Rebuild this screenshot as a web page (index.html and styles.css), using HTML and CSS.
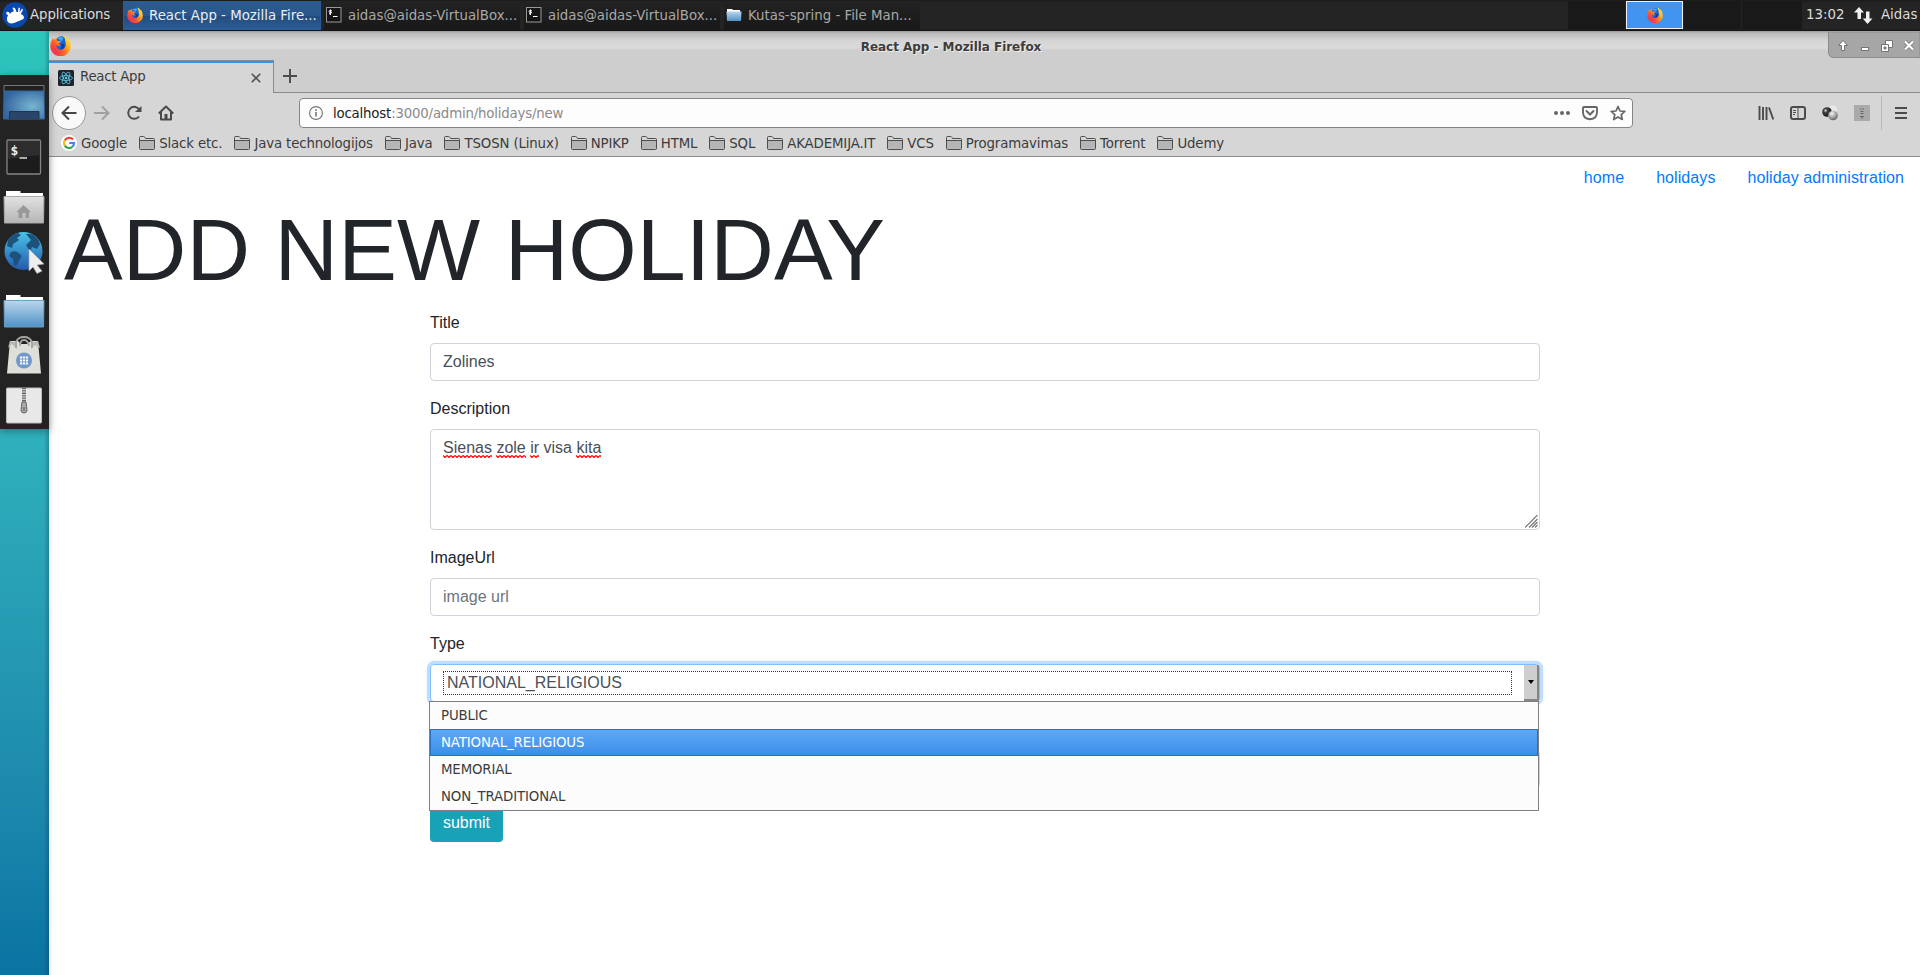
FILE: index.html
```html
<!DOCTYPE html>
<html lang="en">
<head>
<meta charset="utf-8">
<title>React App</title>
<link rel="stylesheet" href="styles.css">
</head>
<body>
<svg class="defs" aria-hidden="true">
  <defs>
    <linearGradient id="fire" x1="1" y1="0" x2="0" y2="1"><stop offset="0" stop-color="#fff44f"/><stop offset=".35" stop-color="#ffb21c"/><stop offset=".65" stop-color="#ff5a2a"/><stop offset="1" stop-color="#e3107c"/></linearGradient>
    <linearGradient id="blueFolder" x1="0" y1="0" x2="0" y2="1"><stop offset="0" stop-color="#bcd6ea"/><stop offset="1" stop-color="#4f92c6"/></linearGradient>
    <linearGradient id="greyFolder" x1="0" y1="0" x2="0" y2="1"><stop offset="0" stop-color="#e2e2e2"/><stop offset="1" stop-color="#b5b5b5"/></linearGradient>
    <linearGradient id="globe" x1="0" y1="0" x2="0" y2="1"><stop offset="0" stop-color="#49c3e6"/><stop offset="1" stop-color="#2459ad"/></linearGradient>
    <radialGradient id="screen" cx=".7" cy=".55" r=".7"><stop offset="0" stop-color="#76b6d0"/><stop offset="1" stop-color="#3565a0"/></radialGradient>
    <radialGradient id="ballDark" cx=".35" cy=".35" r=".7"><stop offset="0" stop-color="#ddd"/><stop offset=".3" stop-color="#444"/><stop offset="1" stop-color="#111"/></radialGradient>
    <radialGradient id="ballGrey" cx=".4" cy=".3" r=".7"><stop offset="0" stop-color="#f4f4f4"/><stop offset="1" stop-color="#666"/></radialGradient>
    <symbol id="firefox" viewBox="0 0 20 20">
      <path d="M2.5 3.2 4 4.6Q5 3 7 2.1L6.7 4.2 10 3.6 13.5 3 13 .5Q15.400 1.300 16.600 4.200L17.400 3.300Q20 6.500 19.800 11A9.800 9.200 0 0 1 .2 11Q.2 6.500 2.500 3.200Z" fill="url(#fire)"/>
      <path d="M6.500 3.500Q10-.5 14 2.500 16 5 15.500 9 14 14.500 10 14.500 5.500 14 5.500 10Z" fill="#1b63d6"/>
      <path d="M7 3Q10 1 13 2.500L11 6Z" fill="#35a9f5"/>
      <path d="M10.500 8.500Q14 8 14 10.500 13 14 9 13.500 12 11.500 10.500 8.500Z" fill="#173a9e"/>
      <path d="M3 4 7 5.500 10.500 6 8.500 8.300 10 10.500Q8 11 6.500 9.500 5.500 11.500 7.500 13 11 15.500 14 12.500 16 10 14.500 6 14.500 3 13.200.8 19 4 18.500 11 17 17 10 17.800 3 16.500 2 10Z" fill="url(#fire)"/>
    </symbol>
    <symbol id="term" viewBox="0 0 16 16">
      <rect x=".5" y=".5" width="14.500" height="14.500" fill="#151515" stroke="#999"/>
      <path d="M6 4Q3 2.600 3 4.200T5 5.500 3 7M4.500 2.500v5.500" fill="none" stroke="#fff"/><path d="M7 9.500h4.500" stroke="#fff"/>
    </symbol>
    <symbol id="folder" viewBox="0 0 16 16">
      <path d="M.5 13.500v-11q0-1 1-1h3q1 0 1.500 1l.5 1h8q1 0 1 1v9q0 1-1 1h-13q-1 0-1-1Z" fill="#d6d6d6" stroke="#4d4d4d"/><path d="M1 5.800h14v8H1Z" fill="#b5b5b5"/><path d="M.5 5.500h15" stroke="#4d4d4d"/>
    </symbol>
  </defs>
</svg>

<header class="panel">
  <div class="apps">
    <svg class="mouse" width="26" height="26" viewBox="0 0 26 26"><circle cx="13" cy="13" r="12.700" fill="#0a48b0"/><path d="M4.500 10Q7 9 8 12 9 9 12 9.500L10.500 6Q12 4.500 13.500 7L14.500 10 16 10 16.500 5.500 18 6 17.500 10.500 20 6.500 21 8 18.800 12Q23 13.500 21.500 17 17 19 12 21 6 22.500 5 18 4.500 14.500 6.200 13.500 3.500 12 4.500 10Z" fill="#fff"/></svg>
    <span class="apps-label">Applications</span>
  </div>
  <nav class="tasks">
    <div class="task task-active"><svg width="16" height="16"><use href="#firefox"/></svg><span>React App - Mozilla Fire...</span></div>
    <div class="task"><svg width="16" height="16"><use href="#term"/></svg><span>aidas@aidas-VirtualBox...</span></div>
    <div class="task"><svg width="16" height="16"><use href="#term"/></svg><span>aidas@aidas-VirtualBox...</span></div>
    <div class="task"><svg width="16" height="16" viewBox="0 0 16 16"><path d="M1 2h5l1 1h7v5H1Z" fill="#fff"/><path d="M.500 4.500h15L15 14H1Z" fill="url(#blueFolder)"/></svg><span>Kutas-spring - File Man...</span></div>
  </nav>
  <div class="pager">
    <i></i><i class="current"><svg width="16" height="16"><use href="#firefox"/></svg></i><i></i><i></i>
  </div>
  <span class="clock">13:02</span>
  <svg class="net" width="19" height="17" viewBox="0 0 19 17"><path d="M5 0 10 5.500H7V12H3.500V5.500H0ZM13.500 17 8.800 11.500H12V4.500H15.500V11.500H18.500Z" fill="#f0f0f0"/></svg>
  <span class="user">Aidas</span>
</header>

<div class="desktop">
  <aside class="side">
    <div class="dock">
      <svg width="42" height="36" viewBox="0 0 42 36"><path d="M1 8V1.500H41V8" fill="#202020" stroke="#777"/><path d="M1 7H41L41.500 35H.5Z" fill="url(#screen)" stroke="#33669a"/><path d="M6.500 35V27.500H36V35" fill="#29466a" stroke="#203650"/></svg>
      <svg width="36" height="36" viewBox="0 0 36 36"><rect x="1" y="1" width="33.500" height="34" rx="1" fill="#1c1c1c" stroke="#858585" stroke-width="1.300"/><path d="M2 2H34V16L2 20Z" fill="#2d2d2d"/><text x="4.500" y="16" class="prompt">$</text><path d="M13.500 19h7.500" stroke="#ddd" stroke-width="1.500"/></svg>
      <svg width="42" height="34" viewBox="0 0 42 34"><path d="M3 9V1H17.500V3H40V10Z" fill="#fff"/><path d="M1 6.500H41L40.500 33H1.500Z" fill="url(#greyFolder)" stroke="#aaa"/><path d="M20.500 15 28 22H26V28H22.500V23H19.500V28H15.500V22H13.500Z" fill="#999"/></svg>
      <svg width="42" height="43" viewBox="0 0 42 43"><circle cx="20.500" cy="20" r="19" fill="url(#globe)"/><path d="M5 9Q9 3 15 2L18 4 14 7 16 9 10 13 9 17 4 15ZM8 21Q13 19 17 23 20 26 17 28L14 34 11 35 10 28 6 25ZM23 3Q30 2 35 8L37 13 34 18 29 16 27 21 23 14 28 9Z" fill="#1c527c"/><path d="M26 18 41 33 34 34 39 40 34 42.500 30 36 26 40Z" fill="#eee" stroke="#aaa" stroke-width=".7"/></svg>
      <svg width="42" height="34" viewBox="0 0 42 34"><path d="M3 9V1H17.500V3H40V10Z" fill="#fff"/><path d="M1 6.500H41L40.500 33H1.500Z" fill="url(#blueFolder)" stroke="#6ba0c6"/></svg>
      <svg width="36" height="39" viewBox="0 0 36 39"><path d="M4 5H12L15 8H21L25 5H32L35 37.500H1Z" fill="#dedfd8"/><path d="M4 5 2 12 6 8 11 13V7ZM32 5 34 12 29 9 25 13V7Z" fill="#b8b9b3"/><path d="M10 12V6Q12 1 18 1T26 6V12M14 10Q14 4 18 4T23 10" fill="none" stroke="#a5a6a1" stroke-width="1.800"/><circle cx="18" cy="24.500" r="8" fill="#7199cb"/><path d="M14 21.500h8M14 24.500h8M14 27.500h8" stroke="#fff" stroke-width="2" stroke-dasharray="2.200 .8"/></svg>
      <svg width="36" height="37" viewBox="0 0 36 37"><rect x=".5" y="1" width="35" height="35" rx="1" fill="#e8e8e8" stroke="#bbb"/><path d="M18 1V16" stroke="#666" stroke-width="4" stroke-dasharray="1 .7"/><path d="M16 15h4l1 8q0 3-3 3t-3-3Z" fill="#aaa" stroke="#666"/><path d="M18 20v4" stroke="#555"/></svg>
    </div>
  </aside>

  <main class="window">
    <div class="titlebar">
      <svg class="window-icon" width="21" height="21"><use href="#firefox"/></svg>
      <span class="window-title">React App - Mozilla Firefox</span>
      <svg class="controls" width="92" height="26" viewBox="0 0 92 26"><path d="M.5 0V20Q.5 25.500 6 25.500H92V0Z" fill="#a6a6a6" stroke="#8b8b8b"/><g fill="#fff" stroke="#747474" stroke-width="1"><path d="M15 8.500 19.500 13.500H16.500V18.500H13.500V13.500H10.500Z"/><rect x="33.500" y="15.500" width="7" height="3"/><path d="M57.500 8.500H64.500V15.500H57.500Z"/><path d="M53.500 12.500H60.500V19.500H53.500Z"/><path d="M56 15h2v2h-2Z" fill="#999"/></g><path d="M77 9.500 85 17.500M85 9.500 77 17.500" stroke="#777" stroke-width="3.800"/><path d="M77 9.500 85 17.500M85 9.500 77 17.500" stroke="#fff" stroke-width="2.200"/></svg>
    </div>

    <div class="tabstrip">
      <div class="tab">
        <svg width="16" height="16" viewBox="0 0 16 16"><rect width="16" height="16" rx="1.500" fill="#20232a"/><g fill="none" stroke="#5ccfee" stroke-width=".8"><ellipse cx="8" cy="8" rx="6.500" ry="2.500"/><ellipse cx="8" cy="8" rx="6.500" ry="2.500" transform="rotate(60 8 8)"/><ellipse cx="8" cy="8" rx="6.500" ry="2.500" transform="rotate(120 8 8)"/></g><circle cx="8" cy="8" r="1.300" fill="#5ccfee"/></svg>
        <span class="tab-title">React App</span>
        <svg width="10" height="10" viewBox="0 0 10 10"><path d="M.7.7 9.300 9.300M9.300.7.7 9.300" stroke="#555" stroke-width="1.600"/></svg>
      </div>
      <svg class="new-tab" width="14" height="14" viewBox="0 0 14 14"><path d="M7 0V14M0 7H14" stroke="#4d4d4d" stroke-width="2"/></svg>
    </div>

    <div class="toolbar">
      <div class="nav-buttons">
        <span class="back"><svg width="16" height="16" viewBox="0 0 16 16"><path d="M15.500 8H1.500M8 1.500 1.500 8 8 14.500" fill="none" stroke="#454545" stroke-width="2"/></svg></span>
        <svg width="16" height="16" viewBox="0 0 16 16"><path d="M0 8H14.500M8 1.500 14.500 8 8 14.500" fill="none" stroke="#a0a0a0" stroke-width="2"/></svg>
        <svg width="16" height="16" viewBox="0 0 16 16"><path d="M13.500 5A6 6 0 1 0 13 11.500" fill="none" stroke="#4b4b4b" stroke-width="2"/><path d="M15.500 1V7H9Z" fill="#4b4b4b"/></svg>
        <svg width="16" height="16" viewBox="0 0 16 16"><path d="M.8 8.500 8 1.500 15.200 8.500M3 7V14.500H13V7" fill="none" stroke="#4b4b4b" stroke-width="2" stroke-linejoin="round"/><path d="M6.500 9H9.500V14H6.500Z" fill="#4b4b4b"/></svg>
      </div>
      <div class="urlbar">
        <svg width="14" height="14" viewBox="0 0 14 14"><circle cx="7" cy="7" r="6.400" fill="none" stroke="#737373" stroke-width="1.100"/><path d="M7 6V10.500M7 3.200V4.900" stroke="#737373" stroke-width="1.600"/></svg>
        <span class="url"><b>localhost</b>:3000/admin/holidays/new</span>
        <svg width="16" height="16" viewBox="0 0 16 16"><g fill="#666"><circle cx="2" cy="8" r="2"/><circle cx="8" cy="8" r="2"/><circle cx="14" cy="8" r="2"/></g></svg>
        <svg width="16" height="16" viewBox="0 0 16 16"><path d="M2 2H14Q15 2 15 3V7Q15 14 8 14.200 1 14 1 7V3Q1 2 2 2Z" fill="none" stroke="#666" stroke-width="1.900"/><path d="M4.500 6 8 9.500 11.500 6" fill="none" stroke="#666" stroke-width="2" stroke-linecap="round"/></svg>
        <svg width="16" height="16" viewBox="0 0 16 16"><path d="M8 1.500 10 6 14.800 6.400 11.200 9.600 12.300 14.500 8 12 3.700 14.500 4.800 9.600 1.200 6.400 6 6Z" fill="none" stroke="#666" stroke-width="1.700" stroke-linejoin="round"/></svg>
      </div>
      <div class="tools">
        <svg width="16" height="16" viewBox="0 0 16 16"><path d="M1.500 1V15M5 2V15M8.500 2V15M11 2.500 15.300 14.500" stroke="#4b4b4b" stroke-width="1.900"/></svg>
        <svg width="16" height="16" viewBox="0 0 16 16"><rect x="1" y="2" width="14" height="12" rx="2" fill="none" stroke="#4b4b4b" stroke-width="2"/><path d="M8 2V14M3 5.500H6M3 7.500H6M3 9.500H5" stroke="#4b4b4b"/></svg>
        <svg width="16" height="16" viewBox="0 0 16 16"><circle cx="11" cy="4.500" r="4" fill="#e8e8e8"/><circle cx="5" cy="7" r="4.800" fill="url(#ballDark)"/><circle cx="11" cy="10.500" r="4.800" fill="url(#ballGrey)"/></svg>
        <svg width="16" height="16" viewBox="0 0 16 16"><path d="M0 0H16V16H0Z" fill="#aaa"/><path d="M6 4H7.500M8.500 4H10M6.500 6.500H9.500M6.500 8.500H9.500M6 11.500H10M7 13H9" stroke="#666"/></svg>
        <i class="divider"></i>
        <svg width="12" height="12" viewBox="0 0 12 12"><path d="M0 1H12M0 6H12M0 11H12" stroke="#4b4b4b" stroke-width="2"/></svg>
      </div>
    </div>

    <div class="bookmarks">
      <span class="mark google"><svg width="16" height="16" viewBox="0 0 16 16"><circle cx="8" cy="8" r="8" fill="#fff"/><g fill="none" stroke-width="2.200"><path d="M12 4.500A5 5 0 0 0 3.800 5.400" stroke="#ea4335"/><path d="M3.800 5.400A5 5 0 0 0 3.800 10.600" stroke="#fbbc05"/><path d="M3.800 10.600A5 5 0 0 0 11.500 11.700" stroke="#34a853"/><path d="M11.500 11.700Q13 10.500 13 8H8.300" stroke="#4285f4"/></g></svg>Google</span>
      <span class="mark"><svg width="16" height="16"><use href="#folder"/></svg>Slack etc.</span>
      <span class="mark"><svg width="16" height="16"><use href="#folder"/></svg>Java technologijos</span>
      <span class="mark"><svg width="16" height="16"><use href="#folder"/></svg>Java</span>
      <span class="mark"><svg width="16" height="16"><use href="#folder"/></svg>TSOSN (Linux)</span>
      <span class="mark"><svg width="16" height="16"><use href="#folder"/></svg>NPIKP</span>
      <span class="mark"><svg width="16" height="16"><use href="#folder"/></svg>HTML</span>
      <span class="mark"><svg width="16" height="16"><use href="#folder"/></svg>SQL</span>
      <span class="mark"><svg width="16" height="16"><use href="#folder"/></svg>AKADEMIJA.IT</span>
      <span class="mark"><svg width="16" height="16"><use href="#folder"/></svg>VCS</span>
      <span class="mark"><svg width="16" height="16"><use href="#folder"/></svg>Programavimas</span>
      <span class="mark"><svg width="16" height="16"><use href="#folder"/></svg>Torrent</span>
      <span class="mark"><svg width="16" height="16"><use href="#folder"/></svg>Udemy</span>
    </div>

    <section class="page">
      <nav class="site-nav"><a>home</a><a>holidays</a><a>holiday administration</a></nav>
      <h1 class="heading">ADD NEW HOLIDAY</h1>
      <form class="form">
        <div class="group"><label class="label">Title</label><div class="control">Zolines</div></div>
        <div class="group"><label class="label">Description</label>
          <div class="control area"><span class="typo">Sienas</span> <span class="typo">zole</span> <span class="typo">ir</span> visa <span class="typo">kita</span>
            <svg class="grip" width="13" height="13" viewBox="0 0 13 13"><path d="M0 12.500 12.500 0M4 12.500 12.500 4M7 12.500 12.500 7M10 12.500 12.500 10" stroke="#777" stroke-width="1.200"/></svg>
          </div></div>
        <div class="group"><label class="label">ImageUrl</label><div class="control hint">image url</div></div>
        <div class="group"><label class="label">Type</label>
          <div class="select">
            <div class="select-value">NATIONAL_RELIGIOUS</div>
            <div class="select-arrow"><svg width="6" height="4" viewBox="0 0 6 4"><path d="M0 0H6L3 4Z" fill="#000"/></svg></div>
            <ul class="options"><li>PUBLIC</li><li class="chosen">NATIONAL_RELIGIOUS</li><li>MEMORIAL</li><li>NON_TRADITIONAL</li></ul>
          </div></div>
        <div class="group last"><div class="control"></div></div>
        <button class="submit" type="button">submit</button>
      </form>
    </section>
  </main>
</div>
</body>
</html>
```
FILE: styles.css
```css
* { box-sizing: border-box; }
body {
  margin: 0; height: 975px; overflow: hidden;
  display: flex; flex-direction: column;
  font: 13.33px "DejaVu Sans", sans-serif; color: #3c3c3c; background: #fff;
}
svg { display: block; flex: none; }
.defs { position: absolute; width: 0; height: 0; }

/* Desktop panel */
.panel {
  display: flex; align-items: center; height: 31px; flex: none;
  background: linear-gradient(#1b1b1b, #242424 3px, #242424 29px, #111 31px);
  color: #dcdcdc; white-space: nowrap; z-index: 2;
}
.apps { width: 123px; display: flex; align-items: center; gap: 2px; padding: 0 0 2px 2px; }
.apps-label { letter-spacing: -.1px; }
.tasks { display: flex; gap: 4px; height: 29px; margin-bottom: 1px; }
.task {
  width: 196px; display: flex; align-items: center; gap: 6px; padding: 0 0 0 2px;
  background: linear-gradient(#232323, #181818); color: #a9a9a9;
}
.task-active {
  width: 198px; gap: 6px; padding-left: 3px; margin-right: -1px; color: #e8eef6; border: 1px solid #2c5c96;
  background: linear-gradient(#2d5c92, #29568b 50%, #234b7c 51%, #2b5c95);
}
.pager { display: flex; gap: 1px; margin-left: auto; height: 28px; margin-bottom: 1px; }
.pager i { width: 57px; background: #191919; display: flex; align-items: center; justify-content: center; }
.pager i:last-child { width: 60px; }
.pager .current { background: #4194ef; border: 1px solid #eef; }
.clock { margin: 0 8px 2px 4px; width: 40px; }
.net { margin-right: 8px; }
.user { width: 39px; margin-bottom: 2px; }

/* Desktop with dock */
.desktop { display: flex; flex: 1; min-height: 0; }
.side {
  width: 49px; flex: none; padding-top: 44px;
  background: linear-gradient(90deg, transparent 44px, rgba(0, 30, 50, .25) 49px),
    linear-gradient(#2cc5bb, #2dbfbc 80px, #2fb1bc 400px, #2599b3 620px, #1b87ac 780px, #0a73a2 944px);
}
.dock {
  height: 354px; background: #232323; padding-top: 9px; position: relative;
  display: flex; flex-direction: column; align-items: center; padding-right: 1px;
  box-shadow: 0 2px 8px rgba(0, 0, 0, .35);
}
.dock svg:nth-child(2) { margin-top: 19px; }
.dock svg:nth-child(3) { margin-top: 15px; }
.dock svg:nth-child(4) { margin-top: 7px; }
.dock svg:nth-child(5) { margin-top: 20px; }
.dock svg:nth-child(6) { margin-top: 8px; }
.dock svg:nth-child(7) { margin-top: 12px; }
.prompt { font: bold 13px "DejaVu Sans Mono", monospace; fill: #eee; }

/* Browser window */
.window { flex: 1; min-width: 0; display: flex; flex-direction: column; }
.titlebar {
  height: 29px; flex: none; display: flex; align-items: flex-start; padding-top: 1px;
  background: linear-gradient(#999, #b9b9b9 2px, #d6d6d6 10px, #dadada 17px, #cecece 19px);
}
.window-icon { margin: 3px 0 0 1px; }
.window-title { flex: 1; padding: 8px 0 0 3px; text-align: center; font-weight: bold; font-size: 12px; letter-spacing: -.04px; text-shadow: 1px 1px #eee; }
.tabstrip { height: 33px; flex: none; display: flex; background: #cecece; border-bottom: 1px solid #8b8b8b; }
.tab {
  width: 225px; height: 33px; display: flex; align-items: center; padding: 1px 12px 0 9px;
  background: #d6d6d6; border-top: 1px solid #8b8b8b; border-right: 1px solid #8b8b8b; box-shadow: inset 0 2px #3d8ee6;
}
.tab-title { flex: 1; padding: 0 0 2px 6px; letter-spacing: -.28px; }
.new-tab { margin: 9px 0 0 9px; }
.toolbar { height: 41px; flex: none; display: flex; align-items: center; background: #d6d6d6; padding-bottom: 1px; }
.nav-buttons { width: 250px; display: flex; align-items: center; gap: 16px; padding-left: 3px; }
.back { width: 34px; height: 34px; margin-right: -8px; border: 1px solid #999; border-radius: 50%; background: #f9f9f9; display: flex; align-items: center; justify-content: center; }
.urlbar { width: 1334px; height: 30px; display: flex; align-items: center; padding: 0 6px 0 9px; gap: 12px; background: #fdfdfd; border: 1px solid #858585; border-radius: 4px; }
.urlbar svg:first-child { margin-right: -2px; }
.url { flex: 1; color: #8a8a8a; letter-spacing: -.19px; }
.url b { font-weight: normal; color: #222; }
.tools { display: flex; align-items: center; gap: 16px; margin-left: 125px; }
.divider { width: 1px; height: 34px; background: #b8b8b8; margin: 0 -3px 0 -5px; }
.bookmarks { height: 23px; flex: none; display: flex; align-items: center; gap: 12px; padding: 0 12px 4px; background: #d6d6d6; border-bottom: 1px solid #8b8b8b; white-space: nowrap; letter-spacing: -.14px; }
.mark { display: flex; align-items: center; gap: 4px; height: 18px; }

/* Page */
.page { flex: 1; font: 16px/24px "Liberation Sans", sans-serif; color: #212529; box-shadow: inset 5px 0 5px -5px rgba(0, 0, 0, .2); }
.site-nav { display: flex; justify-content: flex-end; gap: 32px; padding: 9px 16px 7px; color: #007bff; letter-spacing: .08px; }
.heading { margin: 0 15px 8px; font-size: 88px; font-weight: 300; line-height: 1.2; letter-spacing: .08px; }
.form { width: 1110px; margin-left: 381px; }
.group { margin-bottom: 16px; }
.label { display: block; margin-bottom: 8px; }
.control { height: 38px; padding: 6px 12px; border: 1px solid #ced4da; border-radius: 4px; color: #495057; }
.area { height: 101px; position: relative; }
.hint { color: #6c757d; }
.grip { position: absolute; right: 1px; bottom: 1px; }
.typo {
  display: inline-block; height: 24px; vertical-align: top;
  background: url("data:image/svg+xml,%3Csvg xmlns='http://www.w3.org/2000/svg' width='4' height='3'%3E%3Cpath d='M0 .5 2 2.500 4 .5' fill='none' stroke='red' stroke-width='1.200'/%3E%3C/svg%3E") repeat-x 0 19px;
}
.select {
  position: relative; height: 38px; display: flex; justify-content: space-between; padding: 6px 0 6px 12px; color: #495057;
  border: 1px solid #80bdff; border-radius: 4px; box-shadow: 0 0 0 3.2px rgba(0, 123, 255, .25);
}
.select-value { width: 1069px; height: 24px; border: 1px dotted #333; padding-left: 3px; line-height: 21px; }
.select-arrow { width: 15px; height: 36px; margin-top: -6px; background: #cecece; border-right: 2px solid #858585; border-bottom: 2px solid #858585; display: flex; align-items: center; justify-content: center; }
.options {
  position: absolute; top: 36px; left: -2px; width: 1110px; height: 110px; margin: 0; padding: 0; list-style: none; z-index: 1;
  background: #fcfcfc; border: 1px solid #808080; font: 13.33px/27px "DejaVu Sans", sans-serif; color: #3c3c3c; letter-spacing: -.14px;
}
.options li { height: 27px; padding-left: 11px; }
.options .chosen { line-height: 25px; padding-left: 10px; color: #fff; border: 1px solid #2a6fc0; background: linear-gradient(#5da8f8, #3b8ee8); }
.last { padding-top: 32px; }
.submit { display: block; height: 38px; width: 73px; padding: 0; border: 0; border-radius: 4px; background: #17a2b8; color: #fff; font: 16px/24px "Liberation Sans", sans-serif; }
```
